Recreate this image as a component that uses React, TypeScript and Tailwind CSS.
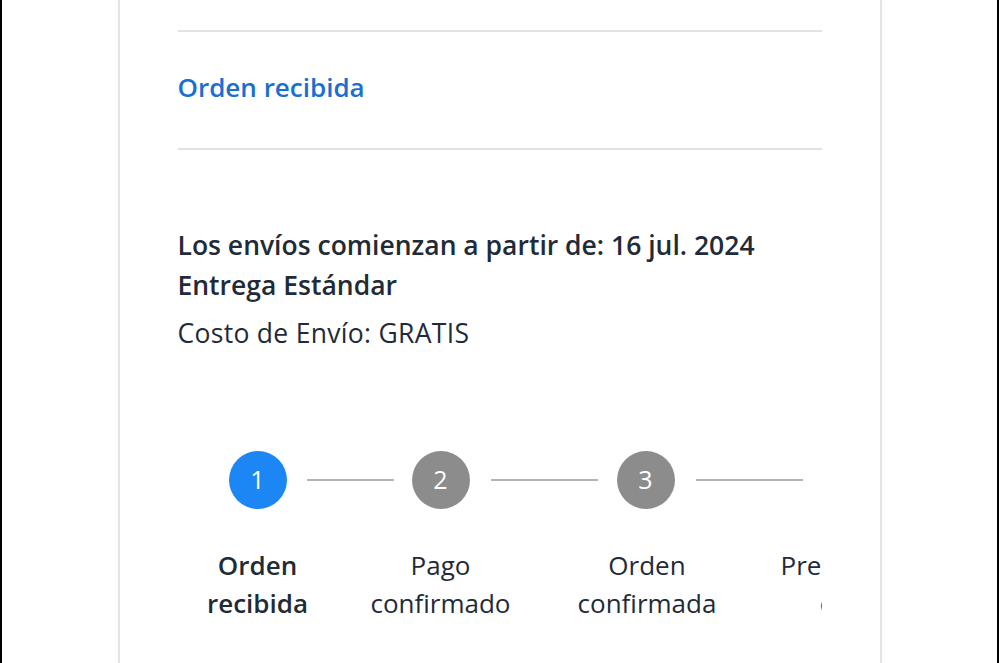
const steps = [
    { n: 1, label: ["Orden", "recibida"], active: true },
    { n: 2, label: ["Pago", "confirmado"], active: false },
    { n: 3, label: ["Orden", "confirmada"], active: false },
    { n: 4, label: ["Preparando", "envío"], active: false },
]

const Circle = ({ n, active }: { n: number; active: boolean }) => (
    <div
        className={`h-[58px] w-[58px] shrink-0 rounded-full flex items-center justify-center text-[25px] text-white ${
            active ? "bg-[#1c87f4]" : "bg-[#8c8c8c]"
        }`}
    >
        {n}
    </div>
)

const Line = ({ w }: { w: string }) => <div className={`h-[2px] shrink-0 bg-[#b4b4b4] ${w}`} />

export default function App() {
    return (
        <div
            className="h-[663px] w-full overflow-hidden bg-white border-x-2 border-black flex justify-center"
            style={{ fontFamily: "'Open Sans', 'Liberation Sans', sans-serif" }}
        >
            <div className="w-[764px] shrink-0 border-x-2 border-[#e4e4e4] px-[58px] pt-[30px] text-[#1f2b38]">
                {/* ORDER STATUS */}
                <div className="border-y-2 border-[#e2e2e2] h-[120px] flex items-center">
                    <h2 className="text-[26px] font-semibold text-[#1a6fd0] leading-none -mt-[6px]">Orden recibida</h2>
                </div>

                {/* SHIPPING */}
                <div className="pt-[75px]">
                    <p className="text-[26.5px] font-semibold leading-[40px]">
                        Los envíos comienzan a partir de: 16 jul. 2024
                    </p>
                    <p className="text-[26.5px] font-semibold leading-[40px]">Entrega Estándar</p>
                    <p className="text-[26.5px] leading-[40px] mt-[8px] tracking-[0.3px]">Costo de Envío: GRATIS</p>
                </div>

                {/* STEPPER */}
                <div className="mt-[98px] overflow-hidden">
                    <div className="flex items-center pl-[51px]">
                        <Circle n={1} active />
                        <div className="ml-[20px]"><Line w="w-[87px]" /></div>
                        <div className="ml-[18px]"><Circle n={2} active={false} /></div>
                        <div className="ml-[21px]"><Line w="w-[107px]" /></div>
                        <div className="ml-[19px]"><Circle n={3} active={false} /></div>
                        <div className="ml-[21px]"><Line w="w-[107px]" /></div>
                        <div className="ml-[20px]"><Circle n={4} active={false} /></div>
                    </div>

                    <div className="flex mt-[37px] text-[26px] leading-[38px] text-center">
                        {steps.map((s, i) => (
                            <div
                                key={s.n}
                                className={`shrink-0 ${
                                    i === 0 ? "w-[160px]" : i === 1 ? "w-[206px]" : i === 2 ? "w-[207px]" : "w-[204px]"
                                } ${s.active ? "font-semibold" : ""}`}
                            >
                                <div>{s.label[0]}</div>
                                <div>{s.label[1]}</div>
                            </div>
                        ))}
                    </div>
                </div>
            </div>
        </div>
    )
}
